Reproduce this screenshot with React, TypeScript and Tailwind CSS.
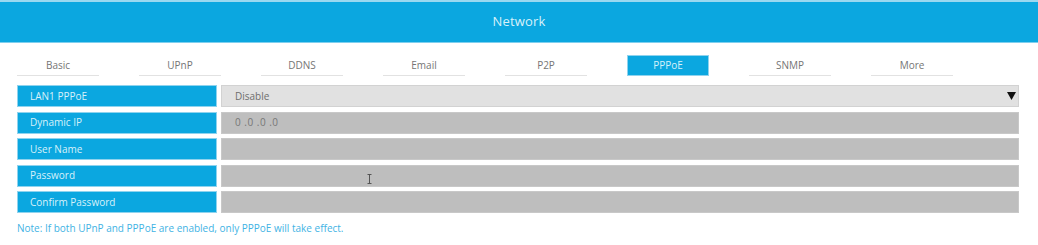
import React from "react";

const tabs = ["Basic", "UPnP", "DDNS", "Email", "P2P", "PPPoE", "SNMP", "More"];

const rows: { label: string; value: string; kind: "select" | "field" }[] = [
  { label: "LAN1 PPPoE", value: "Disable", kind: "select" },
  { label: "Dynamic IP", value: "0 .0 .0 .0", kind: "field" },
  { label: "User Name", value: "", kind: "field" },
  { label: "Password", value: "", kind: "field" },
  { label: "Confirm Password", value: "", kind: "field" },
];

export default function App() {
  return (
    <div
      className="w-[1038px] h-[245px] bg-white overflow-hidden"
      style={{ fontFamily: '"Open Sans", "Liberation Sans", sans-serif' }}
    >
      <div className="h-[2px] bg-[#9ad8f0]" />
      <div className="h-[41px] bg-[#0ba7e0] flex items-center justify-center border-b border-[#7fcfee]">
        <span className="text-[13px] text-[#d8f1fa] tracking-[0.2px]">Network</span>
      </div>
      <div className="pl-[17px] pr-[19px]">
        <div className="flex gap-[40px] mt-[12px]">
          {tabs.map((t) =>
            t === "PPPoE" ? (
              <div
                key={t}
                className="w-[82px] h-[21px] bg-[#0ba7e0] border border-[#8fd3ee] flex items-center justify-center text-[10px] text-[#d8f1fa]"
              >
                {t}
              </div>
            ) : (
              <div
                key={t}
                className="w-[82px] h-[21px] border-b border-[#e2e2e2] flex items-center justify-center text-[10px] text-[#757575]"
              >
                {t}
              </div>
            )
          )}
        </div>
        <div className="flex flex-col gap-[4.5px] mt-[9px]">
          {rows.map((r) => (
            <div key={r.label} className="flex gap-[4px] h-[22px]">
              <div className="w-[200px] bg-[#0ba7e0] border border-[#8fd3ee] flex items-center pl-[12px] text-[10px] text-[#d8f1fa]">
                {r.label}
              </div>
              {r.kind === "select" ? (
                <div className="flex-1 bg-[#e1e1e1] border border-[#d2d2d2] flex items-center pl-[13px] pr-[2px] text-[10px] text-[#6e6e6e]">
                  <span className="flex-1">{r.value}</span>
                  <svg width="9" height="8" viewBox="0 0 9 8">
                    <polygon points="0,0 9,0 4.5,8" fill="#111" />
                  </svg>
                </div>
              ) : (
                <div className="flex-1 bg-[#bebebe] border border-[#c8c8c8] flex items-center pl-[13px] text-[10px] text-[#777] relative">
                  <span className="tracking-[0.5px]">{r.value}</span>
                  {r.label === "Password" && (
                    <svg
                      className="absolute left-[145px] top-[8px]"
                      width="5"
                      height="10"
                      viewBox="0 0 5 10"
                    >
                      <path d="M0.5 0.5H4.5M2.5 0.5V9.5M0.5 9.5H4.5" stroke="#555" strokeWidth="1" fill="none" />
                    </svg>
                  )}
                </div>
              )}
            </div>
          ))}
        </div>
        <div className="mt-[8px] text-[10px] text-[#3fb3e4]">
          Note: If both UPnP and PPPoE are enabled, only PPPoE will take effect.
        </div>
      </div>
    </div>
  );
}
